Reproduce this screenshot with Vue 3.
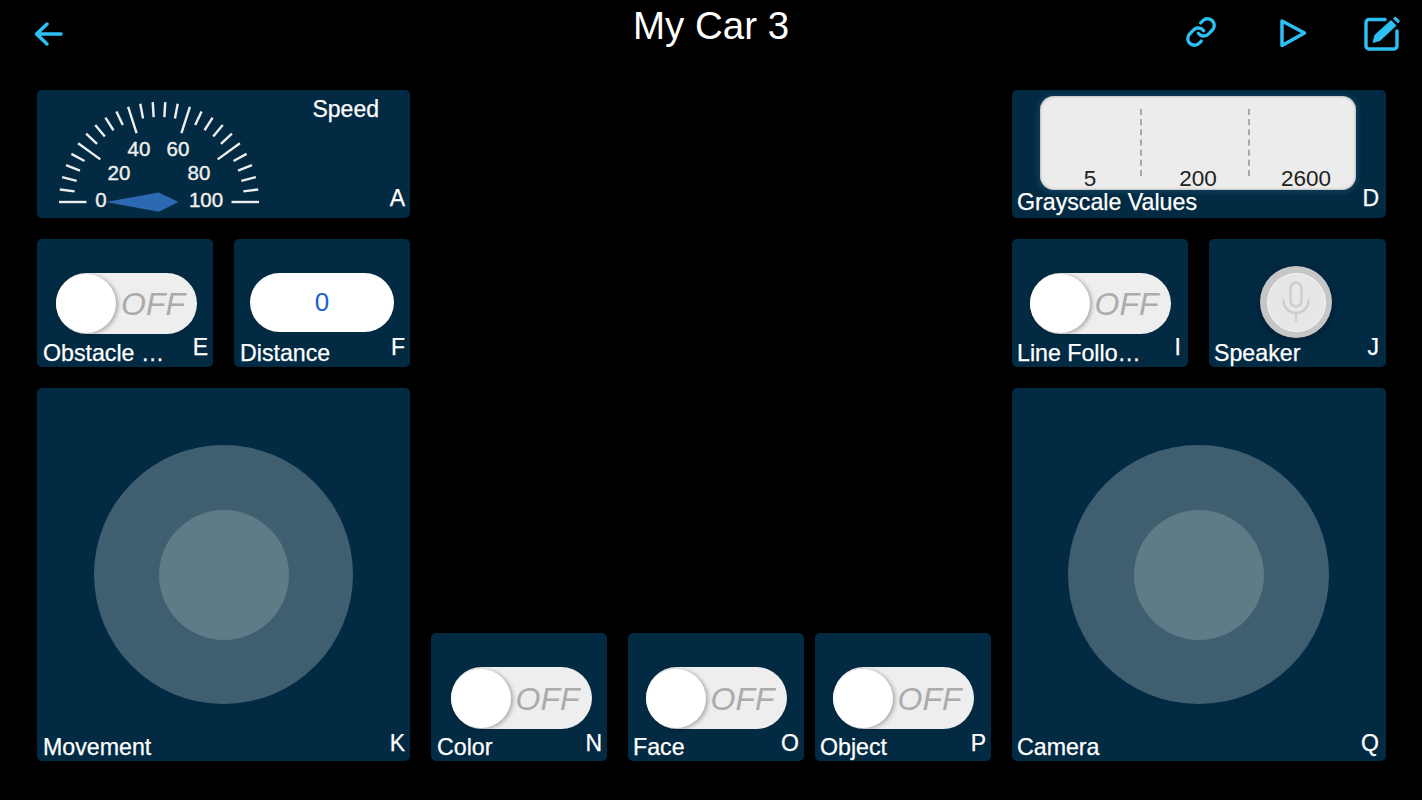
<script setup>
// gauge ticks: 25 steps over the half circle, every 5th one is long
const ticks = []
for (let i = 0; i <= 25; i++) {
  const a = Math.PI - (i * Math.PI) / 25
  const inner = i % 5 === 0 ? 72.5 : 85
  ticks.push({
    x1: 101 + Math.cos(a) * 100,
    y1: 112 - Math.sin(a) * 100,
    x2: 101 + Math.cos(a) * inner,
    y2: 112 - Math.sin(a) * inner
  })
}

const gaugeLabels = [
  { t: '0', x: 43, y: 117 },
  { t: '20', x: 61, y: 90 },
  { t: '40', x: 81, y: 66 },
  { t: '60', x: 120, y: 66 },
  { t: '80', x: 141, y: 90 },
  { t: '100', x: 148, y: 117 }
]
</script>

<template>
  <div class="page">
    <header class="top">
      <svg class="ic-back" width="34" height="30" viewBox="0 0 34 30">
        <path d="M29 15H5M15 5L4.500 15L15 25" />
      </svg>
      <h1>My Car 3</h1>
      <div class="top-icons">
        <svg class="ic ic-link" width="32" height="32" viewBox="0 0 24 24">
          <path d="M10 13a5 5 0 0 0 7.540.540l3-3a5 5 0 0 0-7.070-7.070l-1.720 1.710" />
          <path d="M14 11a5 5 0 0 0-7.540-.540l-3 3a5 5 0 0 0 7.070 7.070l1.710-1.710" />
        </svg>
        <svg class="ic ic-play" width="34" height="36" viewBox="0 0 34 36">
          <path d="M5 7V31.500L27.500 19Z" />
        </svg>
        <svg class="ic ic-edit" width="40" height="40" viewBox="0 0 40 40">
          <path d="M23 5.500H7a3 3 0 0 0-3 3V32a3 3 0 0 0 3 3H32a3 3 0 0 0 3-3V17" />
          <path class="fill" d="M12.500 21L29 6L34.500 11.500L18 27L10.500 29Z" />
          <path class="fill" d="M31 4.500L33.500 2.500L38 7L36 9.500Z" />
        </svg>
      </div>
    </header>

    <main class="board">
      <section class="col col-left">
        <div class="card card-gauge">
          <svg class="gauge" width="204" height="128" viewBox="0 0 204 128">
            <line
              v-for="(k, i) in ticks"
              :key="i"
              :x1="k.x1"
              :y1="k.y1"
              :x2="k.x2"
              :y2="k.y2"
              class="tick"
            />
            <text v-for="l in gaugeLabels" :key="l.t" :x="l.x" :y="l.y" text-anchor="middle">{{ l.t }}</text>
            <polygon points="48,112 100.700,102.500 120.500,112 100.700,121.700" fill="#2d69b2" />
          </svg>
          <div class="gauge-side">
            <span class="speed">Speed</span>
            <span class="letter">A</span>
          </div>
        </div>

        <div class="row">
          <div class="card small">
            <div class="slot nudge-1">
              <div class="toggle"><span class="knob"></span><span class="off">OFF</span></div>
            </div>
            <div class="foot"><span class="name">Obstacle …</span><span class="letter">E</span></div>
          </div>
          <div class="card small">
            <div class="slot">
              <div class="pill">0</div>
            </div>
            <div class="foot"><span class="name">Distance</span><span class="letter">F</span></div>
          </div>
        </div>

        <div class="card big">
          <div class="stick"><div class="stick-in"></div></div>
          <div class="foot"><span class="name">Movement</span><span class="letter">K</span></div>
        </div>
      </section>

      <section class="col col-mid">
        <div class="card small">
          <div class="slot nudge-2">
            <div class="toggle tall"><span class="knob"></span><span class="off">OFF</span></div>
          </div>
          <div class="foot"><span class="name">Color</span><span class="letter">N</span></div>
        </div>
        <div class="card small">
          <div class="slot">
            <div class="toggle tall"><span class="knob"></span><span class="off">OFF</span></div>
          </div>
          <div class="foot"><span class="name">Face</span><span class="letter">O</span></div>
        </div>
        <div class="card small card-object">
          <div class="slot">
            <div class="toggle tall"><span class="knob"></span><span class="off">OFF</span></div>
          </div>
          <div class="foot"><span class="name">Object</span><span class="letter">P</span></div>
        </div>
      </section>

      <section class="col col-right">
        <div class="card card-meter">
          <div class="meter">
            <span class="mark">5</span>
            <span class="mark">200</span>
            <span class="mark">2600</span>
          </div>
          <div class="foot"><span class="name">Grayscale Values</span><span class="letter">D</span></div>
        </div>

        <div class="row">
          <div class="card small">
            <div class="slot">
              <div class="toggle"><span class="knob"></span><span class="off">OFF</span></div>
            </div>
            <div class="foot"><span class="name">Line Follo…</span><span class="letter">I</span></div>
          </div>
          <div class="card small">
            <div class="slot slot-mic">
              <div class="mic">
                <div class="mic-face">
                  <svg width="30" height="42" viewBox="0 0 30 42">
                    <rect x="9.500" y="1.500" width="11" height="24" rx="5.500" />
                    <path d="M2.500 19.500a12.500 12.500 0 0 0 25 0M15 32V40" />
                  </svg>
                </div>
              </div>
            </div>
            <div class="foot"><span class="name">Speaker</span><span class="letter">J</span></div>
          </div>
        </div>

        <div class="card big">
          <div class="stick wide"><div class="stick-in"></div></div>
          <div class="foot"><span class="name">Camera</span><span class="letter">Q</span></div>
        </div>
      </section>
    </main>
  </div>
</template>

<style>
html,
body {
  margin: 0;
  background: #000;
}
</style>

<style scoped>
.page {
  width: 1422px;
  height: 800px;
  background: #000;
  font-family: "Liberation Sans", Arial, sans-serif;
  color: #fff;
  overflow: hidden;
}

/* top bar */
.top {
  height: 90px;
  display: grid;
  grid-template-columns: 1fr auto 1fr;
  align-items: start;
}
.top h1 {
  margin: 5px 0 0;
  font-size: 38.500px;
  line-height: 42px;
  font-weight: 400;
}
.ic-back {
  margin: 19px 0 0 32px;
}
.ic-back path,
.ic path {
  fill: none;
  stroke: #2cc0f4;
  stroke-linecap: round;
  stroke-linejoin: round;
}
.ic-back path {
  stroke-width: 3.500;
}
.ic-link path {
  stroke-width: 2.500;
}
.ic-play path {
  stroke-width: 3.500;
}
.ic-edit path {
  stroke-width: 3.400;
}
.ic-edit path.fill {
  fill: #2cc0f4;
  stroke: none;
}
.top-icons {
  display: flex;
  justify-content: flex-end;
  padding-right: 20px;
}
.ic-link {
  margin: 16px 60px 0 0;
}
.ic-play {
  margin: 14px 51px 0 0;
}
.ic-edit {
  margin-top: 14px;
}

/* board */
.board {
  display: flex;
  gap: 21px;
  padding-left: 37px;
}
.col {
  display: flex;
  flex-direction: column;
  gap: 21px;
}
.col-left {
  width: 373px;
}
.col-right {
  width: 374px;
}
.col-mid {
  width: 560px;
  height: 671px;
  flex-direction: row;
  align-items: flex-end;
}
.card-object {
  margin-left: -10px;
}
.row {
  display: flex;
  gap: 21px;
}
.row .card {
  flex: 0 0 176px;
}
.col-right .row .card:last-child {
  flex-basis: 177px;
}

.card {
  background: #022a43;
  border-radius: 5px;
  height: 128px;
  box-sizing: border-box;
  display: flex;
  flex-direction: column;
}
.small {
  width: 176px;
}
.slot {
  flex: 1;
  padding-top: 34px;
  box-sizing: border-box;
  display: flex;
  justify-content: center;
}
.nudge-1 {
  padding-left: 3px;
}
.nudge-2 {
  padding-left: 4px;
}
.foot {
  height: 25px;
  padding: 0 5px 0 6px;
  display: flex;
  justify-content: space-between;
  align-items: flex-start;
  flex-shrink: 0;
}
.col-right .foot {
  padding: 0 7px 0 5px;
}
.col-mid .card:not(:first-child) .foot {
  padding-left: 5px;
}
.name {
  font-size: 23.200px;
  line-height: 25px;
  white-space: nowrap;
  margin-top: -1px;
  -webkit-text-stroke: 0.25px #fff;
}
.letter {
  font-size: 23px;
  line-height: 25px;
  margin-top: -7px;
  -webkit-text-stroke: 0.25px #fff;
}
.col-mid .letter,
.big .letter {
  margin-top: -5px;
}

/* speed gauge */
.card-gauge {
  flex-direction: row;
  padding-left: 21px;
}
.gauge-side {
  flex: 1;
  display: flex;
  flex-direction: column;
  align-items: flex-end;
  justify-content: space-between;
  padding: 6px 5px 0 0;
  height: 116px;
}
.speed {
  font-size: 23px;
  line-height: 26px;
  margin-right: 26px;
  -webkit-text-stroke: 0.25px #fff;
}
.gauge-side .letter {
  margin: 0 0 1px;
}
.tick {
  stroke: #eee;
  stroke-width: 2.400;
}
.gauge text {
  fill: #eee;
  font-size: 20.500px;
  font-family: "Liberation Sans", Arial, sans-serif;
  stroke: #eee;
  stroke-width: 0.4;
}

/* grayscale meter */
.meter {
  margin: 6px 0 3px 28px;
  width: 316px;
  height: 94px;
  flex-shrink: 0;
  box-sizing: border-box;
  background: #ececec;
  border-radius: 14px;
  box-shadow: inset 0 0 3px #8f8f8f, 0 1px 4px 3px #0d3a55;
  display: flex;
}
.card-meter .name {
  margin-top: -2px;
  line-height: 22px;
}
.mark {
  width: 108px;
  flex-shrink: 0;
  position: relative;
  left: -4px;
  text-align: center;
  color: #222;
  font-size: 22.500px;
  line-height: 19px;
  height: 94px;
  box-sizing: border-box;
  padding-top: 73px;
}
.mark:not(:last-child)::after {
  content: "";
  position: absolute;
  right: 2px;
  top: 13px;
  height: 67px;
  border-right: 2px dashed #a8a8a8;
}

/* toggle switch */
.toggle {
  width: 141px;
  height: 61px;
  border-radius: 31px;
  background: #eee;
  display: flex;
  align-items: center;
  flex-shrink: 0;
}
.tall {
  height: 62px;
}
.knob {
  width: 60px;
  height: 59px;
  border-radius: 50%;
  background: #fff;
  box-shadow: 2px 1px 4px rgba(0, 0, 0, 0.3);
  flex-shrink: 0;
}
.off {
  margin-left: 5px;
  padding-top: 2px;
  font-style: italic;
  font-size: 32px;
  color: #ababab;
}

/* distance pill */
.pill {
  width: 144px;
  height: 59px;
  border-radius: 30px;
  background: #fff;
  color: #1a62c4;
  font-size: 26px;
  line-height: 59px;
  text-align: center;
  flex-shrink: 0;
}

/* speaker */
.slot-mic {
  padding: 27px 3px 0 0;
}
.mic {
  width: 72px;
  height: 72px;
  border-radius: 50%;
  background: radial-gradient(circle, #c6c6c6 0, #c6c6c6 80%, #dcdcdc 95%);
  box-shadow: 0 2px 8px rgba(0, 0, 0, 0.35);
  display: flex;
  align-items: center;
  justify-content: center;
  flex-shrink: 0;
}
.mic-face {
  width: 57px;
  height: 57px;
  border-radius: 50%;
  background: #e7e7e7;
  border: 1.500px solid #f6f6f6;
  display: flex;
  align-items: center;
  justify-content: center;
}
.mic-face svg {
  fill: none;
  stroke: #cdcdcd;
  stroke-width: 2.500;
  stroke-linecap: round;
}

/* joysticks */
.big {
  height: 373px;
  display: grid;
  grid-template-rows: 1fr;
}
.big > * {
  grid-area: 1 / 1;
}
.big .foot {
  align-self: end;
}
.stick {
  width: 259px;
  height: 259px;
  border-radius: 50%;
  background: #3f5f70;
  place-self: center;
  display: flex;
  align-items: center;
  justify-content: center;
}
.stick.wide {
  width: 261px;
  margin-left: -1px;
}
.stick-in {
  width: 130px;
  height: 130px;
  border-radius: 50%;
  background: #5f7b88;
}
</style>
